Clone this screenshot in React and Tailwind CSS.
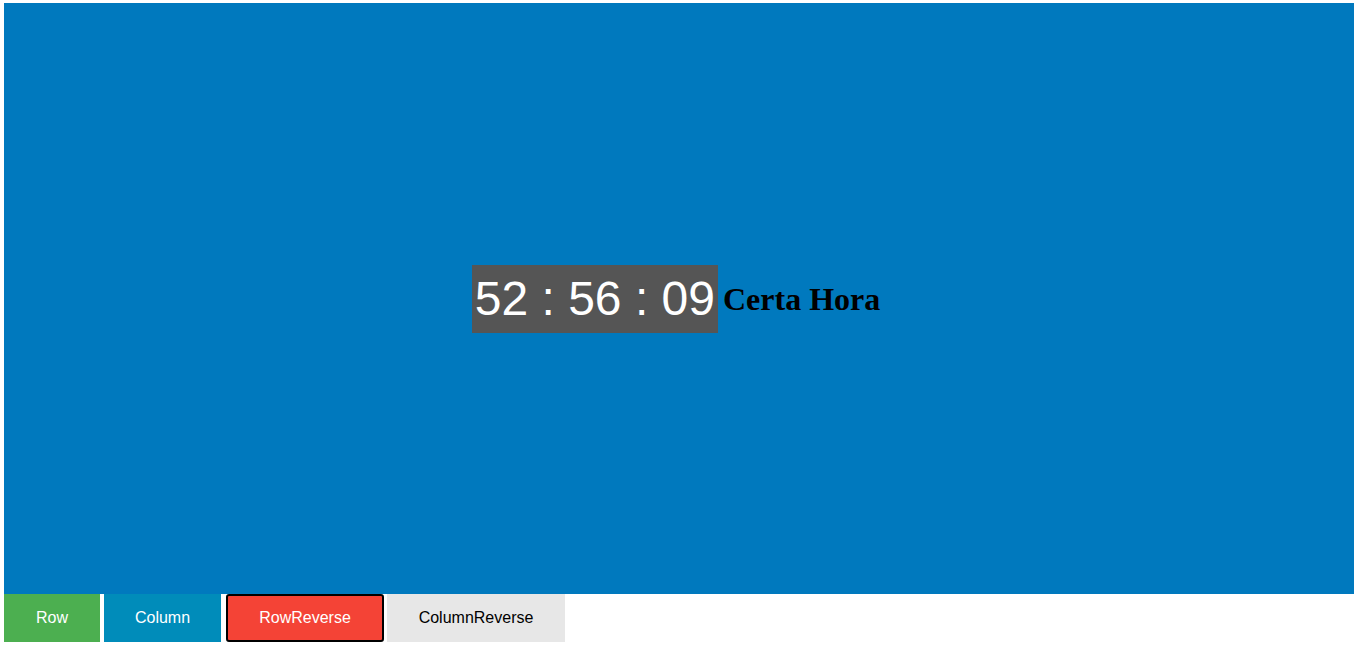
export default function App() {
  const btn = "h-[48px] px-[32px] text-[16px] flex items-center justify-center";
  return (
    <div className="w-[1359px] h-[647px] bg-white pl-[4px] pt-[3px] pr-[5px]" style={{ fontFamily: '"Liberation Sans", Arial, sans-serif' }}>
      <div className="h-[591px] bg-[#0079be] flex items-center justify-center">
        <div className="flex items-center gap-[5px] mr-[6px]">
          <div className="bg-[#555555] text-white text-[48px] leading-[56px] px-[3px] py-[6px]">52 : 56 : 09</div>
          <div className="text-black text-[32px] font-bold" style={{ fontFamily: '"Liberation Serif", "Times New Roman", serif' }}>Certa Hora</div>
        </div>
      </div>
      <div className="flex">
        <button className={btn + " bg-[#4caf50] text-white w-[96px]"}>Row</button>
        <button className={btn + " bg-[#008cba] text-white ml-[4px] w-[117px]"}>Column</button>
        <button className={btn + " bg-[#f44336] text-white ml-[5px] w-[158px] border-2 border-black rounded-[3px]"}>RowReverse</button>
        <button className={btn + " bg-[#e7e7e7] text-black ml-[3px] w-[178px]"}>ColumnReverse</button>
      </div>
    </div>
  );
}
